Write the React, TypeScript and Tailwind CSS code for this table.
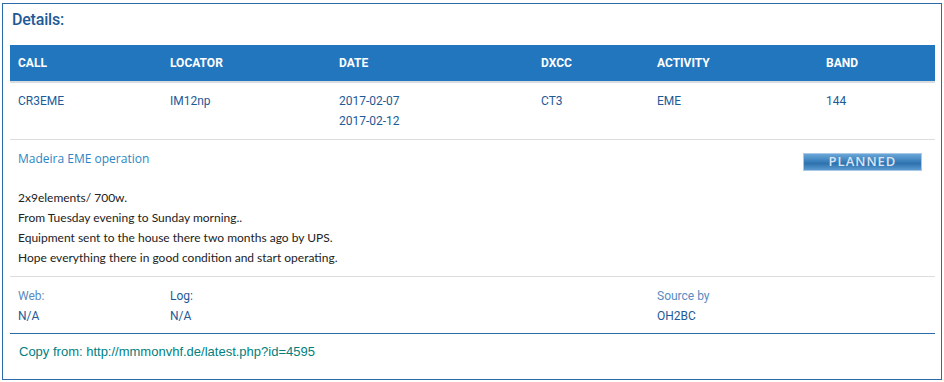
const cols = "grid grid-cols-[152px_169px_202px_116px_169px_1fr] pl-2";

const heads = ["CALL", "LOCATOR", "DATE", "DXCC", "ACTIVITY", "BAND"];

const description = [
  "2x9elements/ 700w.",
  "From Tuesday evening to Sunday morning..",
  "Equipment sent to the house there two months ago by UPS.",
  "Hope everything there in good condition and start operating.",
];

export default function App() {
  return (
    <div className="w-[944px] h-[382px] bg-white pt-[3px] pl-[2px]">
      <div className="w-[940px] h-[377px] border border-[#2d6aa8] pl-[7px] pr-[6px]">
        {/* Title */}
        <div className="h-[41px] pt-[6px] pl-[2px] font-['Roboto',sans-serif] font-medium text-[16px] leading-5 text-[#1e5a96] tracking-[-0.2px]">
          Details:
        </div>

        {/* Header bar */}
        <div
          className={`${cols} h-[36px] items-center bg-[#2176bd] border-b-2 border-[#d8dce0] box-content font-['Roboto',sans-serif] font-bold text-[12px] text-white`}
        >
          {heads.map((h) => (
            <div key={h}>{h}</div>
          ))}
        </div>

        {/* Main row */}
        <div
          className={`${cols} py-2 border-b border-[#dddddd] font-['Roboto',sans-serif] text-[12px] leading-5 text-[#1e5a96]`}
        >
          <div>CR3EME</div>
          <div>IM12np</div>
          <div>
            <div>2017-02-07</div>
            <div>2017-02-12</div>
          </div>
          <div>CT3</div>
          <div>EME</div>
          <div>144</div>
        </div>

        {/* Description */}
        <div className="pl-2 pt-2 pb-2 border-b border-[#dddddd]">
          <div className="flex h-5 items-start justify-between">
            <div className="mt-px font-['Open_Sans',sans-serif] text-[12px] leading-5 text-[#2a86c4]">
              Madeira EME operation
            </div>
            <div className="mt-[5px] mr-[13px] w-[119px] h-[18px] shrink-0 flex items-center justify-center border border-[#a9c8e6] bg-[linear-gradient(to_bottom,#6aa6d8_0%,#3b80bb_45%,#2e72ae_60%,#5a9ad0_100%)] font-['Open_Sans',sans-serif] font-semibold text-[13px] tracking-[1px] text-[#d9e3f4]">
              PLANNED
            </div>
          </div>
          <div className="mt-5 font-['Lato',sans-serif] text-[12px] leading-5 text-[#222222]">
            {description.map((l) => (
              <div key={l}>{l}</div>
            ))}
          </div>
        </div>

        {/* Links */}
        <div
          className={`${cols} pt-[9px] pb-[7px] border-b border-[#2d6aa8] font-['Roboto',sans-serif] text-[12px] leading-5`}
        >
          <div>
            <div className="text-[#5a8bc0]">Web:</div>
            <div className="text-[#1e5a96]">N/A</div>
          </div>
          <div>
            <div className="text-[#1e5a96]">Log:</div>
            <div className="text-[#1e5a96]">N/A</div>
          </div>
          <div />
          <div />
          <div>
            <div className="text-[#5a8bc0]">Source by</div>
            <div className="text-[#1e5a96]">OH2BC</div>
          </div>
          <div />
        </div>

        <div className="pl-[9px] pt-[8px] font-['Liberation_Sans',sans-serif] text-[13px] leading-5 text-[#008080]">
          Copy from: http://mmmonvhf.de/latest.php?id=4595
        </div>
      </div>
    </div>
  );
}
